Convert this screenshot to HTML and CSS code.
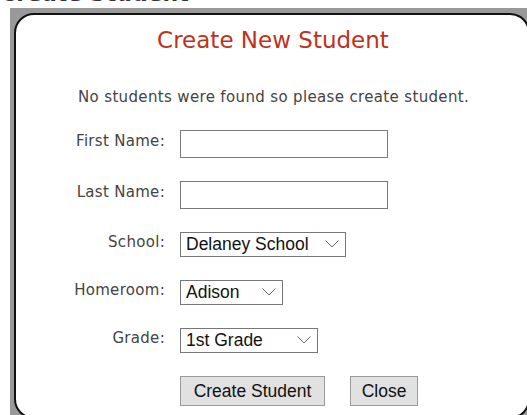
FILE: index.html
```html
<!DOCTYPE html>
<html>
<head>
<meta charset="utf-8">
<link rel="stylesheet" href="styles.css">
</head>
<body>
<header class="page-head">
  <h2 class="page-title">Create Student</h2>
</header>
<div class="backdrop">
  <div class="dialog">
    <h1 class="dialog-title">Create New Student</h1>
    <p class="dialog-msg">No students were found so please create student.</p>
    <form class="student-form">
      <label class="field-label" for="first">First Name:</label>
      <input class="text-input" id="first" type="text">

      <label class="field-label" for="last">Last Name:</label>
      <input class="text-input" id="last" type="text">

      <label class="field-label" for="school">School:</label>
      <span class="select-wrap sw-school">
        <select class="select-box" id="school"><option>Delaney School</option></select>
        <svg class="chev" viewBox="0 0 14 8" width="14" height="8"><path d="M0.5 0.5 L7 7 L13.5 0.5" fill="none" stroke="#666" stroke-width="1"/></svg>
      </span>

      <label class="field-label" for="room">Homeroom:</label>
      <span class="select-wrap sw-room">
        <select class="select-box" id="room"><option>Adison</option></select>
        <svg class="chev" viewBox="0 0 14 8" width="14" height="8"><path d="M0.5 0.5 L7 7 L13.5 0.5" fill="none" stroke="#666" stroke-width="1"/></svg>
      </span>

      <label class="field-label" for="grade">Grade:</label>
      <span class="select-wrap sw-grade">
        <select class="select-box" id="grade"><option>1st Grade</option></select>
        <svg class="chev" viewBox="0 0 14 8" width="14" height="8"><path d="M0.5 0.5 L7 7 L13.5 0.5" fill="none" stroke="#666" stroke-width="1"/></svg>
      </span>

      <span></span>
      <div class="actions">
        <button type="button" class="btn btn-create">Create Student</button>
        <button type="button" class="btn btn-close">Close</button>
      </div>
    </form>
  </div>
</div>
</body>
</html>
```
FILE: styles.css
```css
html, body {
  margin: 0;
  padding: 0;
  background: #fff;
  overflow: hidden;
}

.page-head {
  height: 8px;
  overflow: hidden;
}

.page-title {
  margin: 0;
  margin-top: -17px;
  font: bold 22px "DejaVu Sans", sans-serif;
  line-height: 22px;
  color: #333;
}

/* modal backdrop covering the page */
.backdrop {
  position: fixed;
  left: 10px;
  top: 8px;
  right: 0;
  bottom: 0;
  background: #999;
  padding: 5px 0 0 4px;
}

.dialog {
  width: 516px;
  height: 406px;
  background: #fff;
  border: 2px solid #111;
  border-radius: 20px;
  box-sizing: border-box;
  font-family: "DejaVu Sans", sans-serif;
  color: #444;
}

.dialog-title {
  margin: 11px 0 0;
  text-align: center;
  font-weight: normal;
  font-size: 23px;
  line-height: 28px;
  color: #c1311a;
  padding-left: 2px;
}

.dialog-msg {
  margin: 34px 0 0 62px;
  font-size: 15px;
  letter-spacing: 0.35px;
  line-height: 18px;
}

.student-form {
  display: grid;
  grid-template-columns: 149px auto;
  column-gap: 15px;
  row-gap: 23px;
  align-items: center;
  justify-items: start;
  margin-top: 24px;
}

.field-label {
  justify-self: end;
  font-size: 15px;
  letter-spacing: 0.3px;
  position: relative;
  top: -3px;
}

.text-input {
  width: 208px;
  height: 28px;
  box-sizing: border-box;
  border: 1px solid #777;
  margin: 0;
  padding: 0 4px;
  font: 17.5px "Liberation Sans", Arial, sans-serif;
  background: #fff;
}

.select-wrap {
  position: relative;
  display: inline-block;
}

.select-box {
  -webkit-appearance: none;
  appearance: none;
  height: 25px;
  box-sizing: border-box;
  border: 1px solid #777;
  border-radius: 0;
  background: #fff;
  margin: 0;
  padding: 0 0 0 5px;
  font: 17.5px "Liberation Sans", Arial, sans-serif;
  line-height: 23px;
  color: #111;
  display: block;
}

.sw-school .select-box { width: 166px; }
.sw-room .select-box { width: 103px; }
.sw-grade .select-box { width: 138px; }

.chev {
  position: absolute;
  right: 7px;
  top: 8px;
  pointer-events: none;
}

.actions {
  display: flex;
  gap: 25px;
}

.btn {
  height: 30px;
  box-sizing: border-box;
  border: 1px solid #9a9a9a;
  background: #e1e1e1;
  border-radius: 0;
  font: 17.5px "Liberation Sans", Arial, sans-serif;
  color: #111;
  padding: 0;
  margin: 0;
}

.btn-create { width: 145px; }
.btn-close { width: 68px; }
```
